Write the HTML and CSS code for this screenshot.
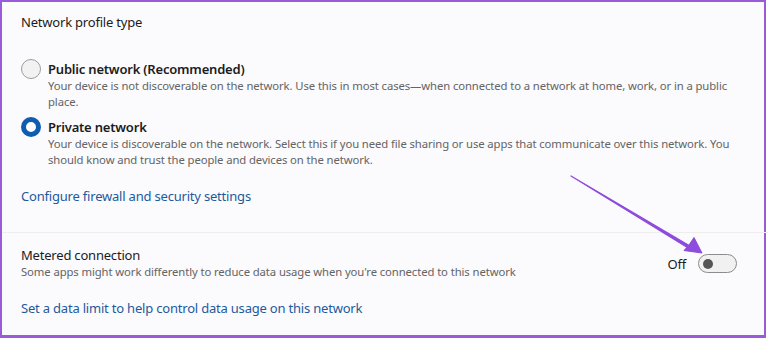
FILE: index.html
```html
<!DOCTYPE html>
<html lang="en">
<head>
  <meta charset="UTF-8">
  <title>Network profile type</title>
  <link rel="stylesheet" href="styles.css">
</head>
<body>
  <div class="frame">
    <div class="heading">Network profile type</div>

    <div class="options">
      <div class="option">
        <span class="radio"></span>
        <div class="option-text">
          <div class="option-title">Public network (Recommended)</div>
          <div class="desc">Your device is not discoverable on the network. Use this in most cases—when connected to a network at home, work, or in a public place.</div>
        </div>
      </div>
      <div class="option">
        <span class="radio checked"></span>
        <div class="option-text">
          <div class="option-title">Private network</div>
          <div class="desc">Your device is discoverable on the network. Select this if you need file sharing or use apps that communicate over this network. You should know and trust the people and devices on the network.</div>
        </div>
      </div>
    </div>

    <a class="link firewall" href="#">Configure firewall and security settings</a>

    <div class="divider"></div>

    <div class="setting">
      <div class="setting-text">
        <div class="setting-title">Metered connection</div>
        <div class="desc">Some apps might work differently to reduce data usage when you're connected to this network</div>
      </div>
      <div class="toggle-wrap">
        <span class="toggle-label">Off</span>
        <span class="toggle"><span class="knob"></span></span>
      </div>
    </div>

    <a class="link limit" href="#">Set a data limit to help control data usage on this network</a>

    <svg class="arrow" width="140" height="90" viewBox="0 0 140 90">
      <path d="M2 2 L121 72 L120 74.5 Z" fill="#8e4bdc" stroke="#8e4bdc" stroke-width="1.2" stroke-linejoin="round"/>
      <path d="M133 79 L115 76.5 L120 71 L125 63.5 Z" fill="#8e4bdc" stroke="#8e4bdc" stroke-width="1" stroke-linejoin="round"/>
    </svg>
  </div>
</body>
</html>
```

FILE: styles.css
```css
body {
  margin: 0;
  background: #fff;
  font-family: 'Noto Sans', 'Open Sans', Arial, sans-serif;
  color: #1c1c1c;
}
.frame {
  position: relative;
  box-sizing: border-box;
  width: 766px;
  height: 338px;
  border: 2px solid #9a5bdb;
  border-bottom-width: 3px;
  background: #fbfafc;
  padding: 10px 0 0 19px;
}
.heading {
  font-size: 13px;
  letter-spacing: -0.2px;
  line-height: 20px;
}
.options {
  margin-top: 28px;
  display: flex;
  flex-direction: column;
  gap: 8px;
}
.option {
  display: flex;
  gap: 7px;
}
.radio {
  flex: none;
  box-sizing: border-box;
  width: 20px;
  height: 20px;
  margin-top: -1px;
  border-radius: 50%;
  border: 1px solid #9c9c9c;
  background: #f2f2f2;
}
.radio.checked {
  border: 5.5px solid #0f5cb0;
  background: #fff;
}
.option-title {
  font-size: 13px;
  letter-spacing: -0.2px;
  font-weight: 600;
  line-height: 18px;
}
.desc {
  font-size: 11.3px;
  letter-spacing: -0.1px;
  line-height: 16px;
  color: #646464;
  padding-right: 30px;
}
.link {
  display: block;
  font-size: 13px;
  letter-spacing: -0.2px;
  line-height: 20px;
  color: #1d5a9c;
  text-decoration: none;
}
.firewall {
  margin-top: 18px;
}
.divider {
  height: 1px;
  background: #efedf0;
  margin: 26px -19px 0 -19px;
}
.setting {
  display: flex;
  align-items: center;
  justify-content: space-between;
  padding: 13px 27px 0 0;
}
.setting-title {
  font-size: 13px;
  letter-spacing: -0.2px;
  line-height: 18px;
}
.toggle-wrap {
  display: flex;
  align-items: center;
  gap: 12px;
  margin-top: 1px;
}
.toggle-label {
  font-size: 13px;
  letter-spacing: -0.2px;
}
.toggle {
  box-sizing: border-box;
  display: flex;
  align-items: center;
  width: 39px;
  height: 19px;
  border: 1px solid #8c8c8c;
  border-radius: 10px;
  background: #f1f1f1;
  padding-left: 4px;
}
.knob {
  width: 10px;
  height: 10px;
  border-radius: 50%;
  background: #555;
}
.limit {
  margin-top: 18px;
}
.arrow {
  position: absolute;
  left: 567px;
  top: 172px;
}
```
